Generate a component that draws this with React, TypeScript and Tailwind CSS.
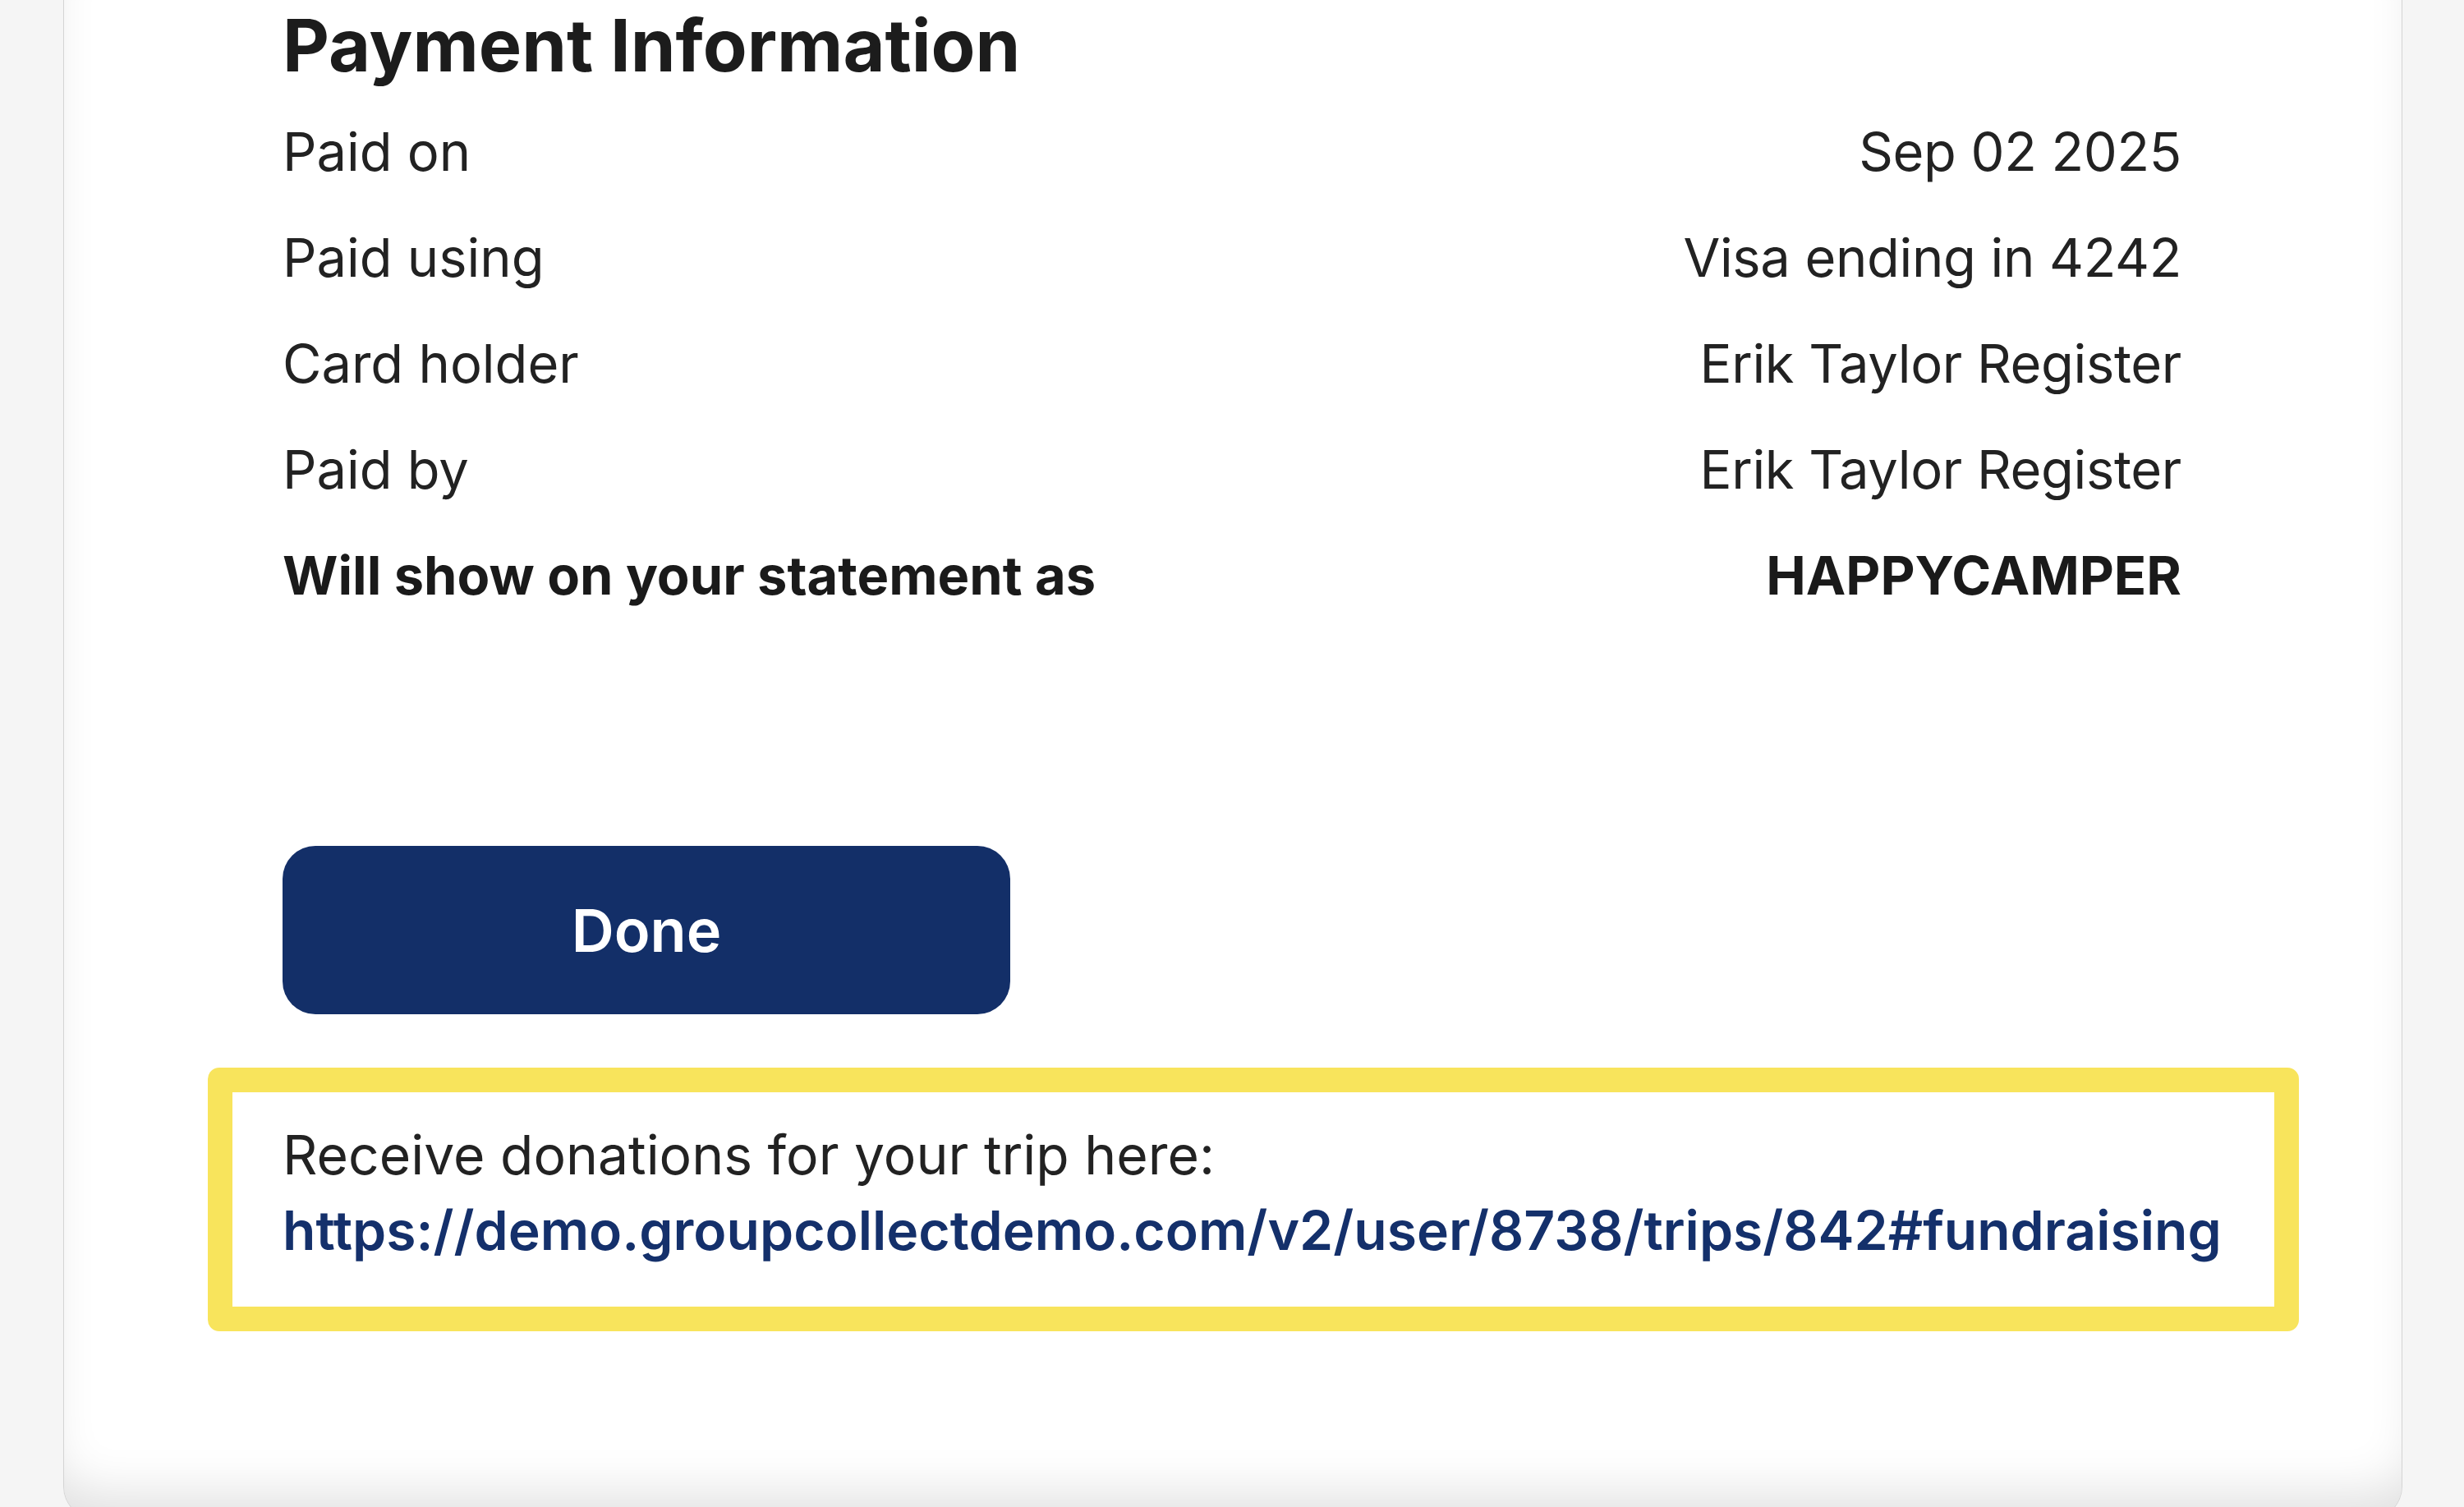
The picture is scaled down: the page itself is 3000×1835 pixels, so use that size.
import React from 'react';

const rows: { label: string; value: string; strong?: boolean }[] = [
  { label: 'Paid on', value: 'Sep 02 2025' },
  { label: 'Paid using', value: 'Visa ending in 4242' },
  { label: 'Card holder', value: 'Erik Taylor Register' },
  { label: 'Paid by', value: 'Erik Taylor Register' },
  { label: 'Will show on your statement as', value: 'HAPPYCAMPER', strong: true },
];

export default function App() {
  return (
    <div
      className="h-[1835px] overflow-hidden bg-[#f5f5f5] pl-[77px] pr-[75px]"
      style={{ fontFamily: 'Inter, "Noto Sans", sans-serif' }}
    >
      <div className="h-[1850px] rounded-b-[40px] border-x border-b border-[#d4d4d4] bg-white pl-[266px] pr-[268px] shadow-[inset_0_-50px_60px_-20px_rgba(0,0,0,0.12)]">
        <h2 className="pt-[11px] text-[88px] font-bold leading-none text-[#1c1c1c]">
          Payment Information
        </h2>

        <div className="mt-[21px]">
          {rows.map((row) => (
            <div
              key={row.label}
              className={`flex h-[129px] items-center justify-between text-[65px] ${
                row.strong ? 'font-bold text-[#1a1a1a]' : 'text-[#222]'
              }`}
            >
              <span>{row.label}</span>
              <span className={row.strong ? '' : 'tracking-[-0.005em]'}>{row.value}</span>
            </div>
          ))}
        </div>

        <button className="mt-[265px] flex h-[205px] w-[886px] items-center justify-center rounded-[40px] bg-[#132f68] text-[72px] font-semibold text-white">
          Done
        </button>

        <div className="ml-[-91px] mt-[65px] h-[321px] w-[2546px] rounded-[14px] border-[30px] border-[#f8e45c] bg-white pl-[61px] pt-[30px]">
          <p className="text-[66px] leading-[92px] text-[#222]">Receive donations for your trip here:</p>
          <a className="block whitespace-nowrap text-[66px] font-semibold leading-[92px] text-[#14306b]" href="#fundraising">
            https://demo.groupcollectdemo.com/v2/user/8738/trips/842#fundraising
          </a>
        </div>
      </div>
    </div>
  );
}
